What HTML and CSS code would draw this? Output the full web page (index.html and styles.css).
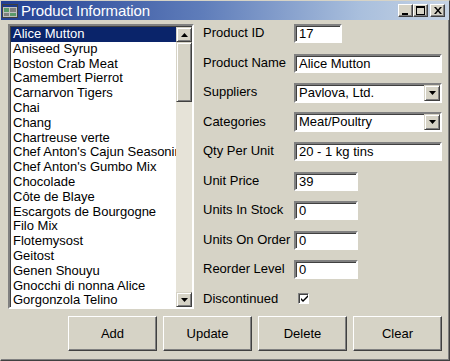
FILE: index.html
```html
<!DOCTYPE html>
<html>
<head>
<meta charset="utf-8">
<link rel="stylesheet" href="styles.css">
</head>
<body>
<div class="window">
  <div class="titlebar">
    <svg class="appicon" width="16" height="16" viewBox="0 0 16 16">
      <rect x="0.5" y="1.5" width="15" height="13" fill="#c0c0c0" stroke="#404040"/>
      <rect x="1" y="2" width="14" height="2" fill="#1c3a8c"/>
      <rect x="2" y="5" width="5" height="4" fill="#5a9a6a"/>
      <rect x="8" y="5" width="6" height="4" fill="#808080"/>
      <rect x="2" y="10" width="5" height="3" fill="#808080"/>
      <rect x="8" y="10" width="6" height="3" fill="#5a9a6a"/>
    </svg>
    <span class="title">Product Information</span>
    <div class="wbtns">
      <div class="wbtn"><svg width="8" height="8" viewBox="0 0 8 8"><rect x="0" y="6" width="6" height="2" fill="#000"/></svg></div>
      <div class="wbtn"><svg width="9" height="9" viewBox="0 0 9 9"><rect x="0.5" y="0.5" width="8" height="8" fill="none" stroke="#000"/><rect x="0" y="0" width="9" height="2" fill="#000"/></svg></div>
      <div class="wbtn close"><svg width="8" height="7" viewBox="0 0 8 7"><path d="M0 0h2l2 2.5L6 0h2L5 3.5 8 7H6L4 4.5 2 7H0l3-3.5z" fill="#000"/></svg></div>
    </div>
  </div>
  <div class="content">
    <div class="main">
      <div class="listbox">
        <ul class="items">
          <li class="sel">Alice Mutton</li>
          <li>Aniseed Syrup</li>
          <li>Boston Crab Meat</li>
          <li>Camembert Pierrot</li>
          <li>Carnarvon Tigers</li>
          <li>Chai</li>
          <li>Chang</li>
          <li>Chartreuse verte</li>
          <li>Chef Anton's Cajun Seasoning</li>
          <li>Chef Anton's Gumbo Mix</li>
          <li>Chocolade</li>
          <li>Côte de Blaye</li>
          <li>Escargots de Bourgogne</li>
          <li>Filo Mix</li>
          <li>Flotemysost</li>
          <li>Geitost</li>
          <li>Genen Shouyu</li>
          <li>Gnocchi di nonna Alice</li>
          <li>Gorgonzola Telino</li>
        </ul>
        <div class="vscroll">
          <div class="sbtn"><svg width="7" height="4" viewBox="0 0 7 4"><path d="M3.5 0L7 4H0z" fill="#000"/></svg></div>
          <div class="track">
            <div class="thumb"></div>
          </div>
          <div class="sbtn"><svg width="7" height="4" viewBox="0 0 7 4"><path d="M0 0h7L3.5 4z" fill="#000"/></svg></div>
        </div>
      </div>
      <div class="form">
        <div class="row"><span class="lbl">Product ID</span><div class="field w-s">17</div></div>
        <div class="row"><span class="lbl">Product Name</span><div class="field w-l">Alice Mutton</div></div>
        <div class="row"><span class="lbl">Suppliers</span><div class="field w-l combo"><span class="val">Pavlova, Ltd.</span><span class="dd"><svg width="7" height="4" viewBox="0 0 7 4"><path d="M0 0h7L3.5 4z" fill="#000"/></svg></span></div></div>
        <div class="row"><span class="lbl">Categories</span><div class="field w-l combo"><span class="val">Meat/Poultry</span><span class="dd"><svg width="7" height="4" viewBox="0 0 7 4"><path d="M0 0h7L3.5 4z" fill="#000"/></svg></span></div></div>
        <div class="row"><span class="lbl">Qty Per Unit</span><div class="field w-l">20 - 1 kg tins</div></div>
        <div class="row"><span class="lbl">Unit Price</span><div class="field w-m">39</div></div>
        <div class="row"><span class="lbl">Units In Stock</span><div class="field w-m">0</div></div>
        <div class="row"><span class="lbl">Units On Order</span><div class="field w-m">0</div></div>
        <div class="row"><span class="lbl">Reorder Level</span><div class="field w-m">0</div></div>
        <div class="row"><span class="lbl">Discontinued</span><div class="check"><svg width="7" height="7" viewBox="0 0 7 7"><path d="M0 3l2 2 5-5v2L2 7 0 5z" fill="#000"/></svg></div></div>
      </div>
    </div>
    <div class="buttons">
      <div class="btn">Add</div>
      <div class="btn">Update</div>
      <div class="btn">Delete</div>
      <div class="btn">Clear</div>
    </div>
  </div>
</div>
</body>
</html>
```
FILE: styles.css
```css
* { box-sizing: border-box; }
html, body { margin: 0; padding: 0; }
body {
  width: 450px;
  height: 361px;
  overflow: hidden;
  font-family: "Liberation Sans", Arial, sans-serif;
  font-size: 13px;
  color: #000;
  background: #d5d2c5;
}
.window {
  width: 450px;
  height: 361px;
  display: flex;
  flex-direction: column;
  background: #d6d3c6;
  border: 1px solid #d6d3c6;
  border-right-color: #404040;
  border-bottom-color: #404040;
  box-shadow: inset -1px -1px 0 #808080;
}
.titlebar {
  height: 19px;
  flex: none;
  display: flex;
  align-items: center;
  padding: 0 4px 0 1px;
  background: linear-gradient(90deg, #223f93 0%, #5f7dba 45%, #a9bfdd 80%, #c5d3e4 100%);
  color: #fff;
}
.appicon { flex: none; margin-right: 3px; }
.title {
  font-size: 15px;
  letter-spacing: -0.1px;
  line-height: 19px;
}
.wbtns {
  margin-left: auto;
  display: flex;
  gap: 0;
}
.wbtn {
  width: 15px;
  height: 13px;
  background: #d6d3c6;
  border: 1px solid;
  border-color: #fff #404040 #404040 #fff;
  box-shadow: inset -1px -1px 0 #808080;
  display: flex;
  align-items: center;
  justify-content: center;
}
.wbtn.close { margin-left: 2px; }
.content {
  flex: 1;
  display: flex;
  flex-direction: column;
  padding: 4px 7px 8px 7px;
}
.main {
  display: flex;
  gap: 9px;
}
.listbox {
  width: 186px;
  height: 285px;
  flex: none;
  display: flex;
  background: #fff;
  border: 2px solid;
  border-color: #808080 #fff #fff #808080;
  box-shadow: inset 1px 1px 0 #404040;
  padding: 1px 0 0 1px;
}
.items {
  list-style: none;
  margin: 0;
  padding: 0;
  flex: 1;
  min-width: 0;
  overflow: hidden;
}
.items li {
  height: 14.8px;
  line-height: 14.8px;
  padding-left: 2px;
  white-space: nowrap;
  overflow: hidden;
}
.items li.sel {
  background: #0a246a;
  color: #fff;
}
.vscroll {
  width: 16px;
  flex: none;
  display: flex;
  flex-direction: column;
}
.sbtn {
  height: 15px;
  flex: none;
  background: #d6d3c6;
  border: 1px solid;
  border-color: #d6d3c6 #404040 #404040 #d6d3c6;
  box-shadow: inset 1px 1px 0 #fff, inset -1px -1px 0 #808080;
  display: flex;
  align-items: center;
  justify-content: center;
}
.track {
  flex: 1;
  background: #e6e3d8;
}
.thumb {
  height: 60px;
  background: #d6d3c6;
  border: 1px solid;
  border-color: #d6d3c6 #404040 #404040 #d6d3c6;
  box-shadow: inset 1px 1px 0 #fff, inset -1px -1px 0 #808080;
}
.form {
  flex: 1;
  display: flex;
  flex-direction: column;
  margin-top: -5px;
}
.row {
  height: 29.5px;
  display: flex;
  align-items: center;
}
.lbl {
  width: 91px;
  flex: none;
  white-space: nowrap;
  padding-top: 0;
  margin-top: -2px;
}
.field {
  height: 19px;
  background: #fff;
  border: 2px solid;
  border-color: #808080 #fff #fff #808080;
  box-shadow: inset 1px 1px 0 #404040;
  padding: 0 3px;
  line-height: 16px;
  white-space: nowrap;
  overflow: hidden;
}
.w-s { width: 48px; }
.w-m { width: 64px; }
.w-l { width: 148px; }
.combo {
  display: flex;
  padding-right: 0;
  height: 20px;
}
.combo .val { flex: 1; }
.dd {
  width: 16px;
  height: 16px;
  flex: none;
  background: #d6d3c6;
  border: 1px solid;
  border-color: #d6d3c6 #404040 #404040 #d6d3c6;
  box-shadow: inset 1px 1px 0 #fff, inset -1px -1px 0 #808080;
  display: flex;
  align-items: center;
  justify-content: center;
}
.check {
  width: 11px;
  height: 11px;
  margin-left: 4px;
  margin-top: -2px;
  background: #fff;
  border: 1px solid;
  border-color: #808080 #fff #fff #808080;
  box-shadow: inset 1px 1px 0 #404040;
  display: flex;
  align-items: center;
  justify-content: center;
  padding: 1px 0 0 1px;
}
.buttons {
  display: flex;
  justify-content: flex-end;
  gap: 6px;
  margin-top: 2px;
  padding-right: 0;
}
.btn {
  width: 89px;
  height: 35px;
  background: #d6d3c6;
  border: 1px solid;
  border-color: #fff #404040 #404040 #fff;
  box-shadow: inset -1px -1px 0 #808080;
  display: flex;
  align-items: center;
  justify-content: center;
}
```
